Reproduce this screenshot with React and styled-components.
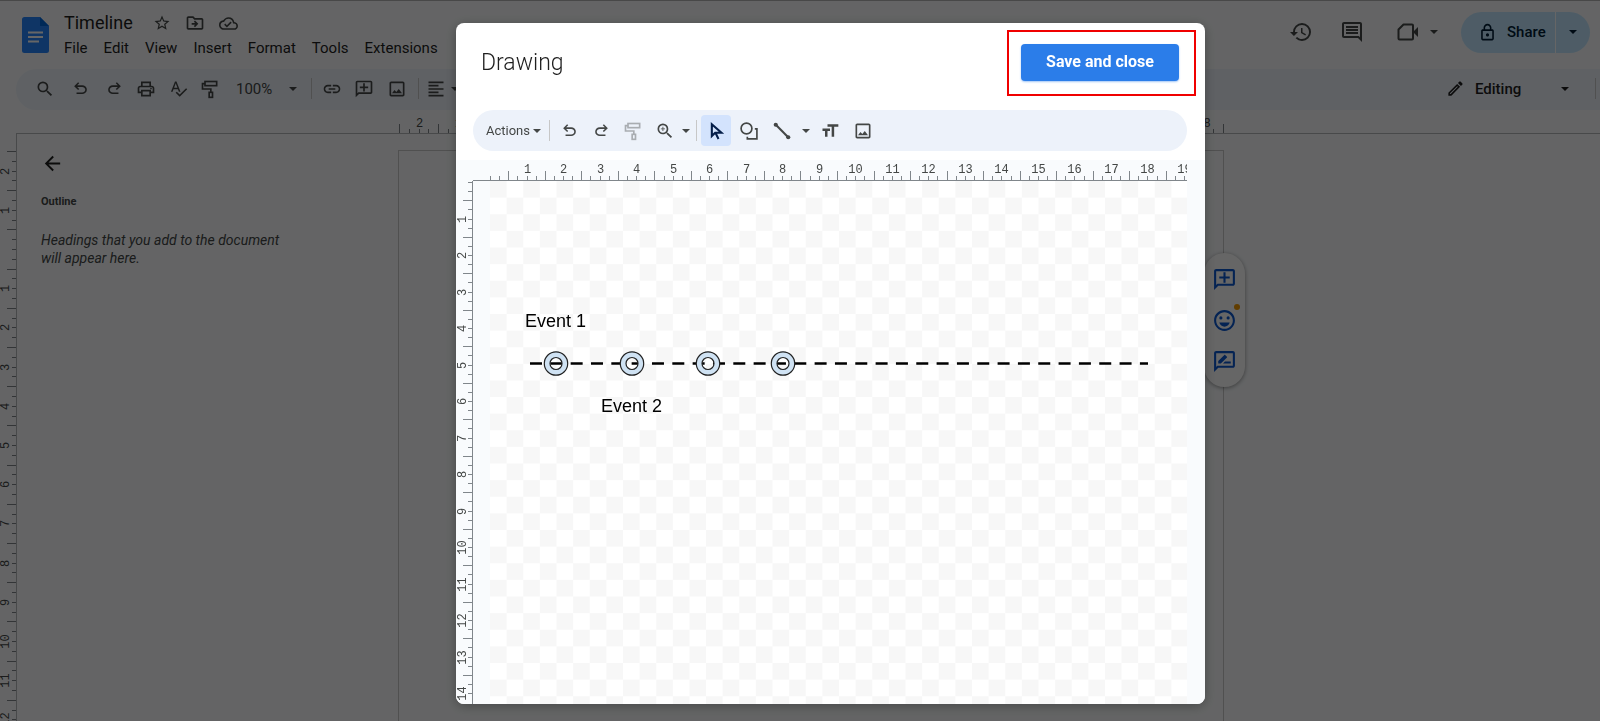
import React from "react";
import styled, { createGlobalStyle } from "styled-components";
import {
  MdArrowBack,
  MdFormatAlignLeft,
  MdFormatSize,
  MdHistory,
  MdLink,
  MdOutlineAddComment,
  MdOutlineCloudDone,
  MdOutlineDriveFileMove,
  MdOutlineEdit,
  MdOutlineEmojiEmotions,
  MdOutlineImage,
  MdOutlineInsertComment,
  MdOutlineLock,
  MdOutlinePrint,
  MdOutlineRateReview,
  MdSearch,
  MdSpellcheck,
  MdStarBorder,
  MdZoomIn,
} from "react-icons/md";

const GlobalStyle = createGlobalStyle`
  * {
    box-sizing: border-box;
  }
  body {
    margin: 0;
    background: #f9fbfd;
    color: #1f1f1f;
    font-family: Roboto, sans-serif;
  }
  button {
    margin: 0;
    padding: 0;
    border: 0;
    background: none;
    color: inherit;
    font-family: inherit;
    cursor: pointer;
  }
`;

const App = styled.div`
  display: flex;
  flex-direction: column;
  height: 100vh;
  overflow: hidden;
  border-top: 1px solid #b4b4b4;
`;

const Header = styled.header`
  display: flex;
  height: 68px;
  padding: 10px 10px 0 22px;
`;

const LogoLink = styled.a`
  margin: 6px 15px 0 0;
`;

const TitleRow = styled.div`
  display: flex;
  align-items: center;
  gap: 14px;
  height: 24px;
`;

const Title = styled.h1`
  margin: 0 6px 0 0;
  padding-bottom: 2px;
  font-size: 18px;
  font-weight: 400;
`;

const MenuBar = styled.nav`
  display: flex;
  align-items: center;
  gap: 16px;
  height: 26px;
`;

const MenuItem = styled.button`
  font-size: 15px;
`;

const HeaderActions = styled.div`
  display: flex;
  align-items: center;
  height: 42px;
  margin-left: auto;
`;

const IconButton = styled.button`
  display: flex;
  align-items: center;
  justify-content: center;
  width: ${(p) => p.$width || 32}px;
  height: 32px;
  color: ${(p) => p.$color || "#444746"};
  opacity: ${(p) => (p.disabled ? 0.4 : 1)};
`;

const ShareGroup = styled.div`
  display: flex;
  align-items: center;
  height: 41px;
  margin-left: 23px;
  border-radius: 21px;
  overflow: hidden;
  background: #c2e7ff;
  color: #001d35;
`;

const ShareButton = styled.button`
  display: flex;
  align-items: center;
  gap: 10px;
  width: 95px;
  height: 41px;
  padding-left: 17px;
  border-right: 1px solid #fff;
  font-size: 15px;
  font-weight: 500;
`;

const Toolbar = styled.div`
  display: flex;
  flex: none;
  align-items: center;
  height: 41px;
  margin-left: 16px;
  padding: 0 0 2px 12px;
  border-radius: 21px 0 0 21px;
  background: #edf2fa;
`;

const ToolSpacer = styled.div`
  flex: 1;
`;

const Divider = styled.span`
  flex: none;
  width: 1px;
  height: 21px;
  margin: 0 4px;
  background: #c7c7c7;
`;

const ZoomButton = styled.button`
  display: flex;
  align-items: center;
  justify-content: space-between;
  width: 75px;
  margin-left: 6px;
  padding: 0 10px 0 4px;
  color: #444746;
  font-size: 15px;
`;

const ModeButton = styled.button`
  display: flex;
  align-items: center;
  gap: 10px;
  width: 123px;
  margin-right: 22px;
  font-size: 15px;
  font-weight: 500;

  svg:last-child {
    margin-left: auto;
  }
`;

const PageRuler = styled.div`
  flex: none;
  height: 24px;
  margin-left: 16px;
  padding-left: 383px;
  border-bottom: 1px solid #b4b7ba;
`;

const Workspace = styled.div`
  display: flex;
  flex: 1;
  min-height: 0;
`;

const SideRuler = styled.div`
  flex: none;
  width: 17px;
  padding-top: 17px;
  border-right: 1px solid #b4b7ba;
  overflow: hidden;
`;

const OutlinePanel = styled.aside`
  flex: none;
  width: 381px;
  padding: 12px 24px;
`;

const OutlineTitle = styled.h2`
  margin: 18px 0 20px;
  color: #444746;
  font-size: 11px;
  font-weight: 700;
  line-height: 18px;
`;

const OutlineHint = styled.p`
  width: 260px;
  margin: 0;
  color: #444746;
  font-size: 14px;
  font-style: italic;
  line-height: 18px;
`;

const BackButton = styled.button`
  display: flex;
  margin-top: 6px;
`;

const Page = styled.main`
  position: relative;
  flex: 0 1 826px;
  margin-top: 16px;
  border: 1px solid #c7c7c7;
  border-bottom: 0;
`;

const SideActions = styled.div`
  position: absolute;
  top: 102px;
  right: -22px;
  display: flex;
  flex-direction: column;
  align-items: center;
  gap: 9px;
  width: 41px;
  padding: 10px 0;
  border-radius: 21px;
  background: #fff;
  box-shadow: 0 1px 4px rgba(0, 0, 0, 0.4);
`;

const Badge = styled.span`
  position: absolute;
  top: 51px;
  right: 5px;
  width: 6px;
  height: 6px;
  border-radius: 50%;
  background: #f29900;
`;

const Scrim = styled.div`
  position: fixed;
  inset: 0;
  display: flex;
  padding: 23px 395px 17px 456px;
  background: rgba(0, 0, 0, 0.6);
`;

const Dialog = styled.section`
  display: flex;
  flex: 1;
  flex-direction: column;
  min-width: 0;
  border-radius: 8px;
  background: #fff;
  box-shadow: 0 2px 12px rgba(0, 0, 0, 0.3);
  overflow: hidden;
`;

const DialogHeader = styled.div`
  display: flex;
  flex: none;
  align-items: center;
  justify-content: space-between;
  height: 87px;
  padding: 0 9px 8px 25px;
`;

const DialogTitle = styled.h2`
  margin: 0;
  font-size: 23px;
  font-weight: 300;
`;

const Highlight = styled.div`
  padding: 12px 15px 13px 12px;
  border: 2px solid #f00000;
`;

const SaveButton = styled.button`
  display: block;
  width: 158px;
  height: 37px;
  padding-bottom: 2px;
  border-radius: 4px;
  background: #2b7de9;
  box-shadow: 0 1px 2px rgba(26, 115, 232, 0.4);
  color: #fff;
  font-size: 16px;
  font-weight: 700;
`;

const DrawToolbar = styled.div`
  display: flex;
  flex: none;
  align-items: center;
  height: 41px;
  margin: 0 18px 9px 17px;
  padding-left: 13px;
  border-radius: 21px;
  background: #edf2fa;
`;

const ToolGroup = styled.div`
  display: flex;
  align-items: center;
  gap: ${(p) => p.$gap}px;
`;

const ActionsButton = styled.button`
  display: flex;
  align-items: center;
  justify-content: space-between;
  width: 59px;
  padding-right: 4px;
  color: #444746;
  font-size: 13px;
`;

const Tool = styled(IconButton)`
  width: ${(p) => p.$width || 30}px;
  height: 31px;
  border-radius: 4px;
  background: ${(p) => (p.$active ? "#d3e3fd" : "none")};
`;

const Board = styled.div`
  display: grid;
  flex: 1;
  grid-template-columns: 17px 1fr 18px;
  grid-template-rows: 21px 1fr;
  min-height: 0;
  background: #f9fbfd;
`;

const BoardTop = styled.div`
  grid-column: 2;
  padding-left: 17px;
  border-bottom: 1px solid #80868b;
  overflow: hidden;
`;

const BoardLeft = styled.div`
  grid-row: 2;
  grid-column: 1;
  padding-top: 1px;
  border-right: 1px solid #80868b;
  overflow: hidden;
`;

const Canvas = styled.div`
  grid-row: 2;
  grid-column: 2;
  padding-left: 17px;
  overflow: hidden;
`;

const Surface = styled.svg`
  display: block;
  width: 100%;
  height: 100%;

  text {
    font-family: "Liberation Sans", Arial, sans-serif;
    font-size: 18px;
  }
`;

const RulerSvg = styled.svg`
  display: block;
  overflow: visible;

  text {
    fill: #444746;
    font-family: "Liberation Mono", monospace;
    font-size: 12px;
    text-anchor: middle;
  }
`;

// `length` pixels hold `units` centimetres, four ticks to each
const Ruler = ({ vertical, length, units, start = 0, thickness, labelAt }) => {
  const ticks = Array.from({ length: units * 4 + 1 }, (_, i) => {
    const value = start + i / 4;
    const at = Math.round((i * length) / units / 4) + 0.5;
    const size = Math.abs(value % 1) === 0.5 ? 9 : 4;
    return { value, at, size };
  });

  return (
    <RulerSvg
      width={vertical ? thickness : length}
      height={vertical ? length : thickness}
      aria-hidden="true"
    >
      {ticks.map(({ value, at, size }) => (
        <React.Fragment key={value}>
          <path
            stroke="#80868b"
            d={
              vertical
                ? `M${thickness - size} ${at}H${thickness}`
                : `M${at} ${thickness - size}V${thickness}`
            }
          />
          {value % 1 === 0 && value !== 0 && (
            <text
              transform={
                vertical
                  ? `translate(${labelAt} ${at}) rotate(-90)`
                  : `translate(${at} ${labelAt})`
              }
            >
              {Math.abs(value)}
            </text>
          )}
        </React.Fragment>
      ))}
    </RulerSvg>
  );
};

const Caret = () => (
  <svg width="8" height="4" viewBox="0 0 8 4" fill="currentColor">
    <path d="M0 0h8L4 4z" />
  </svg>
);

const UndoIcon = () => (
  <svg width="19" height="19" viewBox="0 -960 960 960" fill="currentColor">
    <path d="M280-200v-80h284q63 0 109.500-40T720-420q0-60-46.500-100T564-560H312l104 104-56 56-200-200 200-200 56 56-104 104h252q97 0 169.500 63T800-420q0 94-72.500 157T564-200H280Z" />
  </svg>
);

const RedoIcon = () => (
  <svg width="19" height="19" viewBox="0 -960 960 960" fill="currentColor">
    <path d="M396-200q-97 0-169.500-63T160-420q0-94 66.500-157T396-640h252L544-744l56-56 200 200-200 200-56-56 104-104H396q-63 0-109.500 40T240-420q0 60 46.500 100T396-280h284v80H396Z" />
  </svg>
);

const RollerIcon = () => (
  <svg
    width="20"
    height="20"
    viewBox="0 0 24 24"
    fill="none"
    stroke="currentColor"
    strokeWidth="2"
  >
    <rect x="6" y="3" width="14" height="5" />
    <path d="M6 5.500H3V12h10v4" />
    <rect x="11" y="16" width="4" height="6" />
  </svg>
);

const CameraIcon = () => (
  <svg width="24" height="24" viewBox="0 0 24 24" fill="none">
    <path
      d="M2.500 9.500 7.500 4.500H16a1 1 0 0 1 1 1v13a1 1 0 0 1-1 1H3.500a1 1 0 0 1-1-1z"
      stroke="currentColor"
      strokeWidth="2"
      strokeLinejoin="round"
    />
    <path d="M17 12l5-5v10z" fill="currentColor" />
  </svg>
);

const PointerIcon = () => (
  <svg width="20" height="20" viewBox="0 0 24 24" fill="none">
    <path
      d="M7 4v14l4-4h7.500zM11.500 14.500l3.500 7"
      stroke="currentColor"
      strokeWidth="2.500"
    />
  </svg>
);

const ShapesIcon = () => (
  <svg
    width="20"
    height="20"
    viewBox="0 0 24 24"
    fill="none"
    stroke="currentColor"
    strokeWidth="2"
  >
    <circle cx="9" cy="9" r="6.500" />
    <path d="M19 9.500h2.500v12H10V19" />
  </svg>
);

const LineIcon = () => (
  <svg width="20" height="20" viewBox="0 0 24 24" fill="currentColor">
    <path d="M4 4l16 16" stroke="currentColor" strokeWidth="2.500" />
    <circle cx="4.500" cy="4.500" r="2.500" />
    <circle cx="19.500" cy="19.500" r="2.500" />
  </svg>
);

const DocsLogo = () => (
  <svg width="27" height="36" viewBox="0 0 27 36">
    <path
      d="M2.500 0H18l9 9v24.500a2.500 2.500 0 0 1-2.500 2.500h-22A2.500 2.500 0 0 1 0 33.500v-31A2.500 2.500 0 0 1 2.500 0z"
      fill="#2684fc"
    />
    <path d="M18 0l9 9h-9z" fill="#0066da" />
    <path
      d="M6 15.500h15M6 20h15M6 24.500h11"
      stroke="#fff"
      strokeWidth="2"
    />
  </svg>
);

const FlippedAddComment = styled(MdOutlineAddComment)`
  transform: scaleX(-1);
`;

const menus = [
  "File",
  "Edit",
  "View",
  "Insert",
  "Format",
  "Tools",
  "Extensions",
];

const milestones = [66, 142, 218, 293];

const Milestone = ({ x }) => (
  <g fill="none">
    <circle cx={x} cy="182.500" r="9" stroke="#cfe2f3" strokeWidth="6" />
    <circle cx={x} cy="182.500" r="11.700" stroke="#222" strokeWidth="1.200" />
    <circle cx={x} cy="182.500" r="6" stroke="#222" strokeWidth="1.200" />
  </g>
);

const Timeline = () => (
  <Surface role="img" aria-label="Timeline drawing">
    <defs>
      <pattern
        id="checks"
        width="33.240"
        height="33.240"
        patternUnits="userSpaceOnUse"
      >
        <rect width="34" height="34" fill="#fff" />
        <path
          d="M0 0h16.620v16.620H0zM16.620 16.620h16.620v16.620H16.620z"
          fill="#f7f7f7"
        />
      </pattern>
    </defs>
    <rect width="100%" height="100%" fill="url(#checks)" />
    <path
      d="M40 182.500H658"
      stroke="#000"
      strokeWidth="2.500"
      strokeDasharray="12 8.330"
    />
    {milestones.map((x) => (
      <Milestone key={x} x={x} />
    ))}
    <text x="35" y="146">
      Event 1
    </text>
    <text x="111" y="231">
      Event 2
    </text>
  </Surface>
);

const DrawingDialog = () => (
  <Dialog role="dialog" aria-labelledby="dialog-title">
    <DialogHeader>
      <DialogTitle id="dialog-title">Drawing</DialogTitle>
      <Highlight>
        <SaveButton>Save and close</SaveButton>
      </Highlight>
    </DialogHeader>
    <DrawToolbar>
      <ActionsButton>
        Actions <Caret />
      </ActionsButton>
      <Divider />
      <ToolGroup $gap={2}>
        <Tool aria-label="Undo">
          <UndoIcon />
        </Tool>
        <Tool aria-label="Redo">
          <RedoIcon />
        </Tool>
        <Tool aria-label="Paint format" disabled>
          <RollerIcon />
        </Tool>
        <ToolGroup $gap={0}>
          <Tool aria-label="Zoom">
            <MdZoomIn size={20} />
          </Tool>
          <Tool aria-label="Zoom options" $width={12}>
            <Caret />
          </Tool>
        </ToolGroup>
      </ToolGroup>
      <Divider />
      <ToolGroup $gap={3}>
        <Tool aria-label="Select" $active $color="#041e49">
          <PointerIcon />
        </Tool>
        <Tool aria-label="Shape">
          <ShapesIcon />
        </Tool>
        <Tool aria-label="Line">
          <LineIcon />
        </Tool>
        <Tool aria-label="Line options" $width={12}>
          <Caret />
        </Tool>
        <Tool aria-label="Text box">
          <MdFormatSize size={20} />
        </Tool>
        <Tool aria-label="Image">
          <MdOutlineImage size={20} />
        </Tool>
      </ToolGroup>
    </DrawToolbar>
    <Board>
      <BoardTop>
        <Ruler length={694} units={19} thickness={20} labelAt={13} />
      </BoardTop>
      <BoardLeft>
        <Ruler vertical length={511} units={14} thickness={16} labelAt={10} />
      </BoardLeft>
      <Canvas>
        <Timeline />
      </Canvas>
    </Board>
  </Dialog>
);

export default () => {
  return (
    <>
      <GlobalStyle />
      <App>
        <Header>
          <LogoLink href="#" aria-label="Docs home">
            <DocsLogo />
          </LogoLink>
          <div>
            <TitleRow>
              <Title>Timeline</Title>
              <IconButton aria-label="Star" $width={18}>
                <MdStarBorder size={18} />
              </IconButton>
              <IconButton aria-label="Move" $width={20}>
                <MdOutlineDriveFileMove size={20} />
              </IconButton>
              <IconButton aria-label="Document status" $width={20}>
                <MdOutlineCloudDone size={19} />
              </IconButton>
            </TitleRow>
            <MenuBar>
              {menus.map((name) => (
                <MenuItem key={name}>{name}</MenuItem>
              ))}
            </MenuBar>
          </div>
          <HeaderActions>
            <IconButton aria-label="Version history" $width={34}>
              <MdHistory size={24} />
            </IconButton>
            <IconButton aria-label="Comments" $width={68}>
              <MdOutlineInsertComment size={24} />
            </IconButton>
            <IconButton aria-label="Join a call" $width={44}>
              <CameraIcon />
            </IconButton>
            <IconButton aria-label="Call options" $width={8}>
              <Caret />
            </IconButton>
            <ShareGroup>
              <ShareButton>
                <MdOutlineLock size={19} />
                Share
              </ShareButton>
              <IconButton aria-label="Share options" $width={34} $color="#001d35">
                <Caret />
              </IconButton>
            </ShareGroup>
          </HeaderActions>
        </Header>
        <Toolbar>
          <IconButton aria-label="Search menus" $width={34}>
            <MdSearch size={20} />
          </IconButton>
          <IconButton aria-label="Undo" $width={36}>
            <UndoIcon />
          </IconButton>
          <IconButton aria-label="Redo">
            <RedoIcon />
          </IconButton>
          <IconButton aria-label="Print">
            <MdOutlinePrint size={20} />
          </IconButton>
          <IconButton aria-label="Spelling">
            <MdSpellcheck size={19} />
          </IconButton>
          <IconButton aria-label="Paint format">
            <RollerIcon />
          </IconButton>
          <ZoomButton>
            100% <Caret />
          </ZoomButton>
          <Divider />
          <IconButton aria-label="Insert link">
            <MdLink size={20} />
          </IconButton>
          <IconButton aria-label="Add comment">
            <FlippedAddComment size={20} />
          </IconButton>
          <IconButton aria-label="Insert image" $width={34}>
            <MdOutlineImage size={20} />
          </IconButton>
          <Divider />
          <IconButton aria-label="Align" $width={26}>
            <MdFormatAlignLeft size={20} />
          </IconButton>
          <IconButton aria-label="Align options" $width={12}>
            <Caret />
          </IconButton>
          <ToolSpacer />
          <ModeButton>
            <MdOutlineEdit size={19} />
            Editing
            <Caret />
          </ModeButton>
          <Divider />
        </Toolbar>
        <PageRuler>
          <Ruler
            length={824}
            units={21}
            start={-2.5}
            thickness={23}
            labelAt={17}
          />
        </PageRuler>
        <Workspace>
          <SideRuler>
            <Ruler
              vertical
              length={588}
              units={15}
              start={-2.5}
              thickness={16}
              labelAt={9}
            />
          </SideRuler>
          <OutlinePanel>
            <BackButton aria-label="Close outline">
              <MdArrowBack size={23} />
            </BackButton>
            <OutlineTitle>Outline</OutlineTitle>
            <OutlineHint>
              Headings that you add to the document will appear here.
            </OutlineHint>
          </OutlinePanel>
          <Page>
            <SideActions>
              <IconButton aria-label="Add comment" $color="#0b57d0">
                <FlippedAddComment size={25} />
              </IconButton>
              <IconButton aria-label="Add emoji reaction" $color="#0b57d0">
                <MdOutlineEmojiEmotions size={25} />
              </IconButton>
              <IconButton aria-label="Suggest edits" $color="#0b57d0">
                <MdOutlineRateReview size={25} />
              </IconButton>
              <Badge />
            </SideActions>
          </Page>
        </Workspace>
      </App>
      <Scrim>
        <DrawingDialog />
      </Scrim>
    </>
  );
};
